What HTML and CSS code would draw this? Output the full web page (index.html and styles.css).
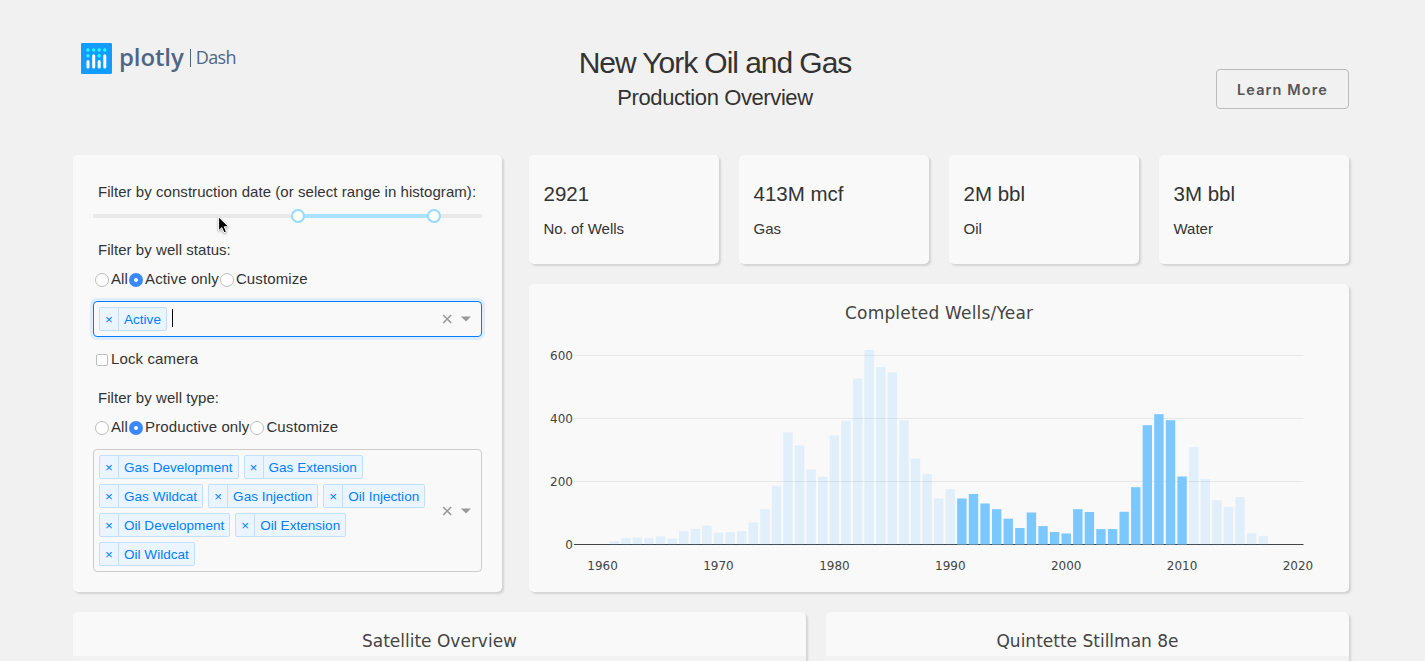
FILE: index.html
```html
<!DOCTYPE html>
<html lang="en">
<head>
<meta charset="utf-8">
<title>New York Oil and Gas</title>
<link rel="stylesheet" href="styles.css">
</head>
<body>
<header class="header">
  <div class="logo">
    <svg class="logo-mark" viewBox="0 0 31 31">
      <rect width="31" height="31" rx="1.2" fill="#119dff"/>
      <g fill="#25fefd"><circle cx="7" cy="7" r="1.7"/><circle cx="12.7" cy="7" r="1.7"/><circle cx="18.2" cy="7" r="1.7"/><circle cx="23.8" cy="7" r="1.7"/><circle cx="7" cy="12.7" r="1.7"/><circle cx="18.2" cy="12.7" r="1.7"/></g>
      <g stroke="#fff" stroke-width="3" stroke-linecap="round"><path d="M7 18.5v5.5M12.7 12.7v11.3M18.2 18.5v5.5M23.8 12.7v11.3"/></g>
    </svg>
    <span class="logo-name">plotly</span><span class="logo-bar"></span><span class="logo-dash">Dash</span>
  </div>
  <div class="titles">
    <h1>New York Oil and Gas</h1>
    <h2>Production Overview</h2>
  </div>
  <div class="action"><button class="learn">Learn More</button></div>
</header>
<main>
  <div class="row top">
    <section class="card filters">
      <p class="label date">Filter by construction date (or select range in histogram):</p>
      <div class="slider"><i class="rail"></i><i class="track"></i><i class="rail end"></i>
        <i class="handle from"></i><i class="handle to"></i>
        <svg class="cursor" viewBox="0 0 12 18"><path d="M.6.8v13.9l3.2-3 2.2 5 2.4-1-2.1-4.9h4.4z" fill="#000" stroke="#fff" stroke-width="1"/></svg>
      </div>
      <p class="label status">Filter by well status:</p>
      <div class="options"><i class="radio"></i><span>All</span><i class="radio on"></i><span>Active only</span><i class="radio"></i><span>Customize</span></div>
      <div class="select focus">
        <div class="tags"><span class="tag"><b>×</b><span>Active</span></span><i class="caret"></i></div>
        <svg class="controls" viewBox="0 0 30 12"><path d="M1.2 2l8 8M9.2 2l-8 8" stroke="#999" stroke-width="1.6"/><path d="M19 3.5h10l-5 5z" fill="#999"/></svg>
      </div>
      <div class="options lock"><i class="check"></i><span>Lock camera</span></div>
      <p class="label type">Filter by well type:</p>
      <div class="options"><i class="radio"></i><span>All</span><i class="radio on"></i><span>Productive only</span><i class="radio"></i><span>Customize</span></div>
      <div class="select types">
        <div class="tags">
          <span class="tag"><b>×</b><span>Gas Development</span></span><span class="tag"><b>×</b><span>Gas Extension</span></span>
          <span class="tag"><b>×</b><span>Gas Wildcat</span></span><span class="tag"><b>×</b><span>Gas Injection</span></span><span class="tag"><b>×</b><span>Oil Injection</span></span>
          <span class="tag"><b>×</b><span>Oil Development</span></span><span class="tag"><b>×</b><span>Oil Extension</span></span>
          <span class="tag"><b>×</b><span>Oil Wildcat</span></span>
        </div>
        <svg class="controls" viewBox="0 0 30 12"><path d="M1.2 2l8 8M9.2 2l-8 8" stroke="#999" stroke-width="1.6"/><path d="M19 3.5h10l-5 5z" fill="#999"/></svg>
      </div>
    </section>
    <div class="right">
      <div class="minis">
        <section class="card mini"><h3>2921</h3><p>No. of Wells</p></section>
        <section class="card mini"><h3>413M mcf</h3><p>Gas</p></section>
        <section class="card mini"><h3>2M bbl</h3><p>Oil</p></section>
        <section class="card mini"><h3>3M bbl</h3><p>Water</p></section>
      </div>
      <section class="card chart"><svg id="wells" viewBox="529 284 820 308"></svg></section>
    </div>
  </div>
  <div class="row bottom">
    <section class="card map"><h4>Satellite Overview</h4><div class="plot"></div></section>
    <section class="card well"><h4>Quintette Stillman 8e</h4><div class="plot"></div></section>
  </div>
</main>
<script src="chart.js"></script>
</body>
</html>
```
FILE: styles.css
```css
* { box-sizing: border-box; margin: 0; padding: 0; }
body { width: 1425px; height: 661px; overflow: hidden; background: #f1f1f1; color: #333; font: 15px/24px "Liberation Sans", Arial, sans-serif; }
svg { display: block; }
.header { display: grid; grid-template-columns: 1fr 640px 1fr; height: 155px; padding: 0 76px 0 81px; }
.logo { display: flex; align-items: flex-start; padding-top: 42px; color: #506784; white-space: nowrap; }
.logo-mark { width: 31px; height: 31px; margin-top: 0.5px; }
.logo-name { margin-left: 7px; font: 600 24px/30px "Open Sans", sans-serif; letter-spacing: -0.1px; }
.logo-bar { width: 1px; height: 18px; margin: 7px 5px 0 6px; background: #506784; }
.logo-dash { font: 400 18px/31px "Open Sans", sans-serif; letter-spacing: -0.6px; }
.titles { padding-top: 45px; text-align: center; }
h1, h2, h3, h4 { font-weight: 400; }
h1 { font-size: 30px; line-height: 36px; letter-spacing: -1.05px; }
h2 { font-size: 22px; line-height: 33px; letter-spacing: -0.4px; }
.action { display: flex; justify-content: flex-end; padding-top: 69px; }
.learn { width: 133px; height: 40px; padding-top: 1px; border: 1px solid #bbb; border-radius: 4px; background: transparent; color: #555; font: 600 14.5px/38px Inter, sans-serif; letter-spacing: 1.1px; }
.row { display: flex; margin: 0 76px 20px 73px; }
.card { border-radius: 5px; background: #f9f9f9; box-shadow: 2px 2px 2px lightgrey; }
.top { height: 437px; gap: 27px; }
.filters { width: 429px; padding: 25px 20px 0; }
.label { padding-left: 5px; letter-spacing: 0.05px; white-space: nowrap; }
.slider { position: relative; display: flex; height: 14px; margin-top: 5px; padding-top: 5px; }
.rail { width: 205px; height: 4px; background: #e9e9e9; }
.rail.end { width: 48px; }
.track { width: 136px; height: 4px; background: #abe2fb; }
.handle { position: absolute; top: 0; width: 14px; height: 14px; border: 2px solid #96dbfa; border-radius: 50%; background: #fff; }
.from { left: 198px; }
.to { left: 334px; }
.cursor { position: absolute; left: 125px; top: 7px; width: 12px; height: 18px; filter: drop-shadow(0 1px 1px rgba(0,0,0,.35)); }
.status { margin-top: 15px; }
.options { display: flex; align-items: center; height: 24px; margin-top: 5px; padding-left: 2px; letter-spacing: 0.12px; white-space: nowrap; }
.options span { margin: 0 1px 0 2px; }
.radio { width: 14px; height: 14px; margin-top: 2px; border: 1px solid #bdbdbd; border-radius: 50%; background: #fff; }
.radio.on { border: 5px solid #3b87fd; }
.check { width: 12px; height: 12px; margin: 2px 1px 0; border: 1px solid #bdbdbd; border-radius: 2px; background: #fff; }
.select { display: flex; align-items: center; justify-content: space-between; height: 36px; margin-top: 10px; padding: 0 9px 0 5px; border: 1px solid #ccc; border-radius: 4px; }
.select.focus { border-color: #007eff; box-shadow: 0 0 0 3px rgba(0,126,255,.1); }
.select.types { height: 123px; }
.tags { display: flex; flex-wrap: wrap; gap: 5px; width: 335px; }
.tag { display: flex; height: 24px; border: 1px solid #c2dfff; border-radius: 2px; background: #ebf5ff; color: #007eff; font-size: 13.5px; line-height: 24px; letter-spacing: 0.03px; white-space: nowrap; }
.tag b { width: 19px; border-right: 1px solid #c2dfff; font-weight: 400; text-align: center; }
.tag > span { padding: 0 5px; }
.caret { width: 1px; height: 18px; margin: 2px 0 0; background: #000; }
.controls { width: 30px; height: 12px; }
.lock { margin-top: 10px; }
.type { margin-top: 15px; }
.right { display: flex; flex-direction: column; gap: 20px; }
.minis { display: flex; gap: 20px; }
.mini { width: 190px; height: 109px; padding: 23px 14.5px; }
.mini h3 { font-size: 20.5px; line-height: 32px; }
.mini p { margin-top: 7px; }
.chart { width: 820px; height: 308px; }
.chart text { fill: #444; font-family: "DejaVu Sans", Verdana, sans-serif; font-size: 12px; }
.chart .title { font-size: 17px; }
.bottom { gap: 20px; margin-bottom: 0; }
.bottom .card { height: 49px; border-radius: 5px 5px 0 0; }
.map { width: 733px; }
.well { width: 523px; }
h4 { height: 44px; padding-top: 17px; color: #444; font: 17px/25px "DejaVu Sans", Verdana, sans-serif; text-align: center; }
.plot { height: 5px; background: #f2f2f2; }
```
FILE: chart.js
```js
// Bar heights in pixels, one per year from 1961
const heights = [3.3,6.3,7,6.3,8,6,13.3,15.7,19,12,12.3,13.3,22,35.3,58.7,112,99,75,67.7,109,123.7,166,194.5,177.3,172,124,86,70.3,46,55.3,
  46,50.5,41,35.3,25.8,16.5,32,18.4,12.5,11,35.3,32.5,15.4,15.4,32.7,57.3,119.3,130.3,124.3,68,97.3,65.3,44.3,37.7,47.3,11.3,8.3];
const base = 544.5;
let out = '<text class="title" x="845" y="319" textLength="188">Completed Wells/Year</text>';
[[600, 355.4], [400, 418.4], [200, 481.5], [0, 544.5]].forEach(([v, y]) => {
  out += `<text x="573" y="${y + 4.5}" text-anchor="end">${v}</text>`;
  if (v) out += `<path d="M574 ${y}H1303.5" stroke="#e6e6e6"/>`;
});
out += `<path d="M574 ${base}H1303.5" stroke="#444"/>`;
heights.forEach((h, i) => {
  const year = 1961 + i, x = 602.6 + (year - 1960) * 11.59 - 4.7;
  const active = year > 1990 && year < 2011;
  out += `<rect x="${x}" y="${base - h}" width="9.4" height="${h}" fill="rgb(123,199,255)" fill-opacity="${active ? 1 : 0.2}"/>`;
});
for (let y = 1960; y <= 2020; y += 10) out += `<text x="${602.6 + (y - 1960) * 11.59}" y="570" text-anchor="middle">${y}</text>`;
document.getElementById('wells').innerHTML = out;
```
